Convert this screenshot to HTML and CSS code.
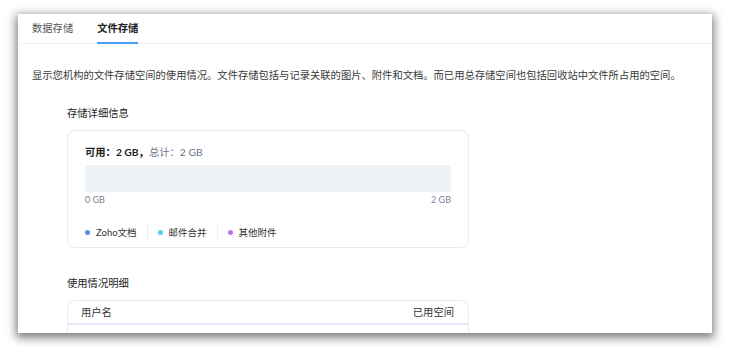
FILE: index.html
```html
<!DOCTYPE html>
<html lang="zh-CN">
<head>
<meta charset="utf-8">
<title>文件存储</title>
<link rel="stylesheet" href="styles.css">
</head>
<body>
<div class="panel">
  <div class="tabs">
    <div class="tab">数据存储</div>
    <div class="tab active">文件存储</div>
  </div>
  <div class="content">
    <p class="desc">显示您机构的文件存储空间的使用情况。文件存储包括与记录关联的图片、附件和文档。而已用总存储空间也包括回收站中文件所占用的空间。</p>
    <section class="section">
      <h3 class="sec-title">存储详细信息</h3>
      <div class="card">
        <div class="stat"><b>可用：2 GB，</b><span class="total">总计：2 GB</span></div>
        <div class="bar"></div>
        <div class="axis"><span>0 GB</span><span>2 GB</span></div>
        <div class="legend">
          <div class="legend-item"><i class="dot dot-blue"></i>Zoho文档</div>
          <div class="legend-item"><i class="dot dot-cyan"></i>邮件合并</div>
          <div class="legend-item"><i class="dot dot-purple"></i>其他附件</div>
        </div>
      </div>
      <h3 class="sec-title sec-title-2">使用情况明细</h3>
      <div class="table">
        <div class="thead"><span>用户名</span><span>已用空间</span></div>
        <div class="tbody"></div>
      </div>
    </section>
  </div>
</div>
</body>
</html>
```
FILE: styles.css
```css
* { box-sizing: border-box; }
html, body { margin: 0; padding: 0; background: #fff; }
body {
  font-family: Lato, "Noto Sans CJK SC", sans-serif;
  font-size: 10.3px;
  color: #333;
  padding: 14px 0 0 18px;
  height: 347px;
  overflow: hidden;
}
.panel {
  width: 694px;
  height: 319px;
  background: #fff;
  overflow: hidden;
  box-shadow: 0 3px 9px 2px rgba(0, 0, 0, 0.5);
}
.tabs {
  display: flex;
  gap: 24px;
  padding-left: 14px;
  height: 30px;
  border-bottom: 1px solid #eef0f2;
}
.tab {
  line-height: 28px;
  color: #555;
  border-bottom: 2px solid transparent;
  height: 30px;
}
.tab.active {
  color: #222;
  font-weight: bold;
  border-bottom-color: #4a9cf6;
}
.content { padding: 23px 14px 0; }
.desc { margin: 0; line-height: 16px; color: #3a3a3a; }
.section { margin-left: 35px; width: 402px; }
.sec-title {
  margin: 22px 0 0;
  font-size: 10.3px;
  font-weight: normal;
  line-height: 16px;
  color: #222;
}
.sec-title-2 { margin-top: 27px; }
.card {
  margin-top: 9px;
  border: 1px solid #e7ebf0;
  border-radius: 8px;
  padding: 13px 17px 6px;
}
.stat { line-height: 16px; color: #222; }
.stat b { font-weight: bold; }
.total { color: #67758c; }
.bar {
  margin-top: 5px;
  height: 27px;
  background: #eef2f5;
  border-radius: 2px;
}
.axis {
  display: flex;
  justify-content: space-between;
  margin-top: 2px;
  font-size: 9px;
  line-height: 12px;
  color: #7a8496;
}
.legend {
  display: flex;
  margin-top: 17px;
  height: 18px;
  align-items: stretch;
}
.legend-item {
  display: flex;
  align-items: center;
  gap: 6px;
  padding: 0 10px;
  font-size: 9.5px;
  color: #333;
  border-left: 1px solid #eef0f2;
}
.legend-item:first-child { padding-left: 0; border-left: 0; }
.dot {
  width: 5px;
  height: 5px;
  border-radius: 50%;
  display: inline-block;
}
.dot-blue { background: #5a8cf0; }
.dot-cyan { background: #4fd0ee; }
.dot-purple { background: #c26df0; }
.table {
  margin-top: 9px;
  border: 1px solid #e7ebf0;
  border-radius: 8px 8px 0 0;
  height: 60px;
}
.thead {
  display: flex;
  justify-content: space-between;
  padding: 0 14px 0 13px;
  height: 24px;
  line-height: 22px;
  border-bottom: 2px solid #e3eaf3;
  color: #333;
}
```
